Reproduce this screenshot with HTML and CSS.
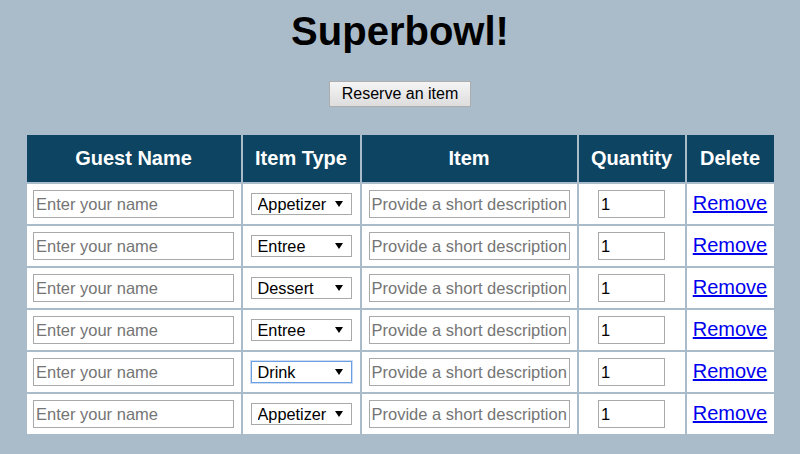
FILE: index.html
```html
<!DOCTYPE html>
<html>
<head>
<meta charset="utf-8">
<title>Superbowl!</title>
<link rel="stylesheet" href="styles.css">
</head>
<body>
<div class="page">
  <h1 class="title">Superbowl!</h1>
  <button class="reserve" type="button">Reserve an item</button>
  <table class="items">
    <colgroup>
      <col class="c-name"><col class="c-type"><col class="c-item"><col class="c-qty"><col class="c-del">
    </colgroup>
    <thead>
      <tr><th>Guest Name</th><th>Item Type</th><th>Item</th><th>Quantity</th><th>Delete</th></tr>
    </thead>
    <tbody>
      <tr>
        <td><input class="txt name" type="text" placeholder="Enter your name"></td>
        <td><span class="sel"><select><option selected>Appetizer</option><option>Entree</option><option>Dessert</option><option>Drink</option></select></span></td>
        <td><input class="txt desc" type="text" placeholder="Provide a short description"></td>
        <td><input class="txt qty" type="text" value="1"></td>
        <td><a href="#" class="remove">Remove</a></td>
      </tr>
      <tr>
        <td><input class="txt name" type="text" placeholder="Enter your name"></td>
        <td><span class="sel"><select><option>Appetizer</option><option selected>Entree</option><option>Dessert</option><option>Drink</option></select></span></td>
        <td><input class="txt desc" type="text" placeholder="Provide a short description"></td>
        <td><input class="txt qty" type="text" value="1"></td>
        <td><a href="#" class="remove">Remove</a></td>
      </tr>
      <tr>
        <td><input class="txt name" type="text" placeholder="Enter your name"></td>
        <td><span class="sel"><select><option>Appetizer</option><option>Entree</option><option selected>Dessert</option><option>Drink</option></select></span></td>
        <td><input class="txt desc" type="text" placeholder="Provide a short description"></td>
        <td><input class="txt qty" type="text" value="1"></td>
        <td><a href="#" class="remove">Remove</a></td>
      </tr>
      <tr>
        <td><input class="txt name" type="text" placeholder="Enter your name"></td>
        <td><span class="sel"><select><option>Appetizer</option><option selected>Entree</option><option>Dessert</option><option>Drink</option></select></span></td>
        <td><input class="txt desc" type="text" placeholder="Provide a short description"></td>
        <td><input class="txt qty" type="text" value="1"></td>
        <td><a href="#" class="remove">Remove</a></td>
      </tr>
      <tr>
        <td><input class="txt name" type="text" placeholder="Enter your name"></td>
        <td><span class="sel"><select class="focused"><option>Appetizer</option><option>Entree</option><option>Dessert</option><option selected>Drink</option></select></span></td>
        <td><input class="txt desc" type="text" placeholder="Provide a short description"></td>
        <td><input class="txt qty" type="text" value="1"></td>
        <td><a href="#" class="remove">Remove</a></td>
      </tr>
      <tr>
        <td><input class="txt name" type="text" placeholder="Enter your name"></td>
        <td><span class="sel"><select><option selected>Appetizer</option><option>Entree</option><option>Dessert</option><option>Drink</option></select></span></td>
        <td><input class="txt desc" type="text" placeholder="Provide a short description"></td>
        <td><input class="txt qty" type="text" value="1"></td>
        <td><a href="#" class="remove">Remove</a></td>
      </tr>
    </tbody>
  </table>
</div>
</body>
</html>
```

FILE: styles.css
```css
html, body {
  margin: 0;
  padding: 0;
  background: #aabcc9;
  font-family: "Liberation Sans", Arial, sans-serif;
  color: #000;
}

.page {
  padding-top: 8px;
  text-align: center;
}

.title {
  margin: 0;
  font-size: 40px;
  line-height: 46px;
  font-weight: bold;
}

.reserve {
  display: block;
  margin: 27px auto 0;
  height: 26px;
  padding: 0 12px;
  font-family: "Liberation Sans", Arial, sans-serif;
  font-size: 16px;
  color: #000;
  border: 1px solid #adadad;
  border-radius: 0;
  background: linear-gradient(#f5f5f5, #dddddd);
}

.items {
  margin: 26px auto 0;
  table-layout: fixed;
  width: 751px;
  border-collapse: separate;
  border-spacing: 2px;
}

.c-name { width: 214px; }
.c-type { width: 117px; }
.c-item { width: 215px; }
.c-qty { width: 106px; }
.c-del { width: 87px; }

.items th {
  height: 47px;
  padding: 0;
  background: #0c4461;
  color: #fff;
  font-size: 20px;
  font-weight: bold;
  text-align: center;
  vertical-align: middle;
}

.items td {
  height: 40px;
  padding: 0;
  background: #fff;
  text-align: center;
  vertical-align: middle;
  line-height: 20px;
}

.txt {
  box-sizing: border-box;
  height: 28px;
  padding: 0 1px 0 2px;
  border: 1px solid #a9a9a9;
  border-radius: 0;
  font-family: "Liberation Sans", Arial, sans-serif;
  font-size: 16.5px;
  color: #000;
  background: #fff;
  vertical-align: middle;
  outline: none;
}

.txt::placeholder {
  color: #757575;
}

.name, .desc { width: 201px; }
.qty { width: 67px; }

.sel {
  position: relative;
  display: inline-block;
  vertical-align: middle;
}

.sel select {
  -webkit-appearance: none;
  appearance: none;
  box-sizing: border-box;
  display: block;
  width: 101px;
  height: 22px;
  margin: 0;
  padding: 0 0 0 6px;
  border: 1px solid #a9a9a9;
  border-radius: 0;
  background: #fff;
  font-family: "Liberation Sans", Arial, sans-serif;
  font-size: 16.3px;
  color: #000;
  text-align: left;
  outline: none;
}

.sel select.focused {
  border-color: #6b9fe2;
  box-shadow: 0 0 0 1px rgba(107, 159, 226, 0.35);
}

.sel::after {
  content: "";
  position: absolute;
  right: 9px;
  top: 8px;
  width: 0;
  height: 0;
  border-left: 4px solid transparent;
  border-right: 4px solid transparent;
  border-top: 6px solid #000;
  pointer-events: none;
}

.remove {
  font-size: 20px;
  color: #0000ee;
  text-decoration: underline;
}
```
